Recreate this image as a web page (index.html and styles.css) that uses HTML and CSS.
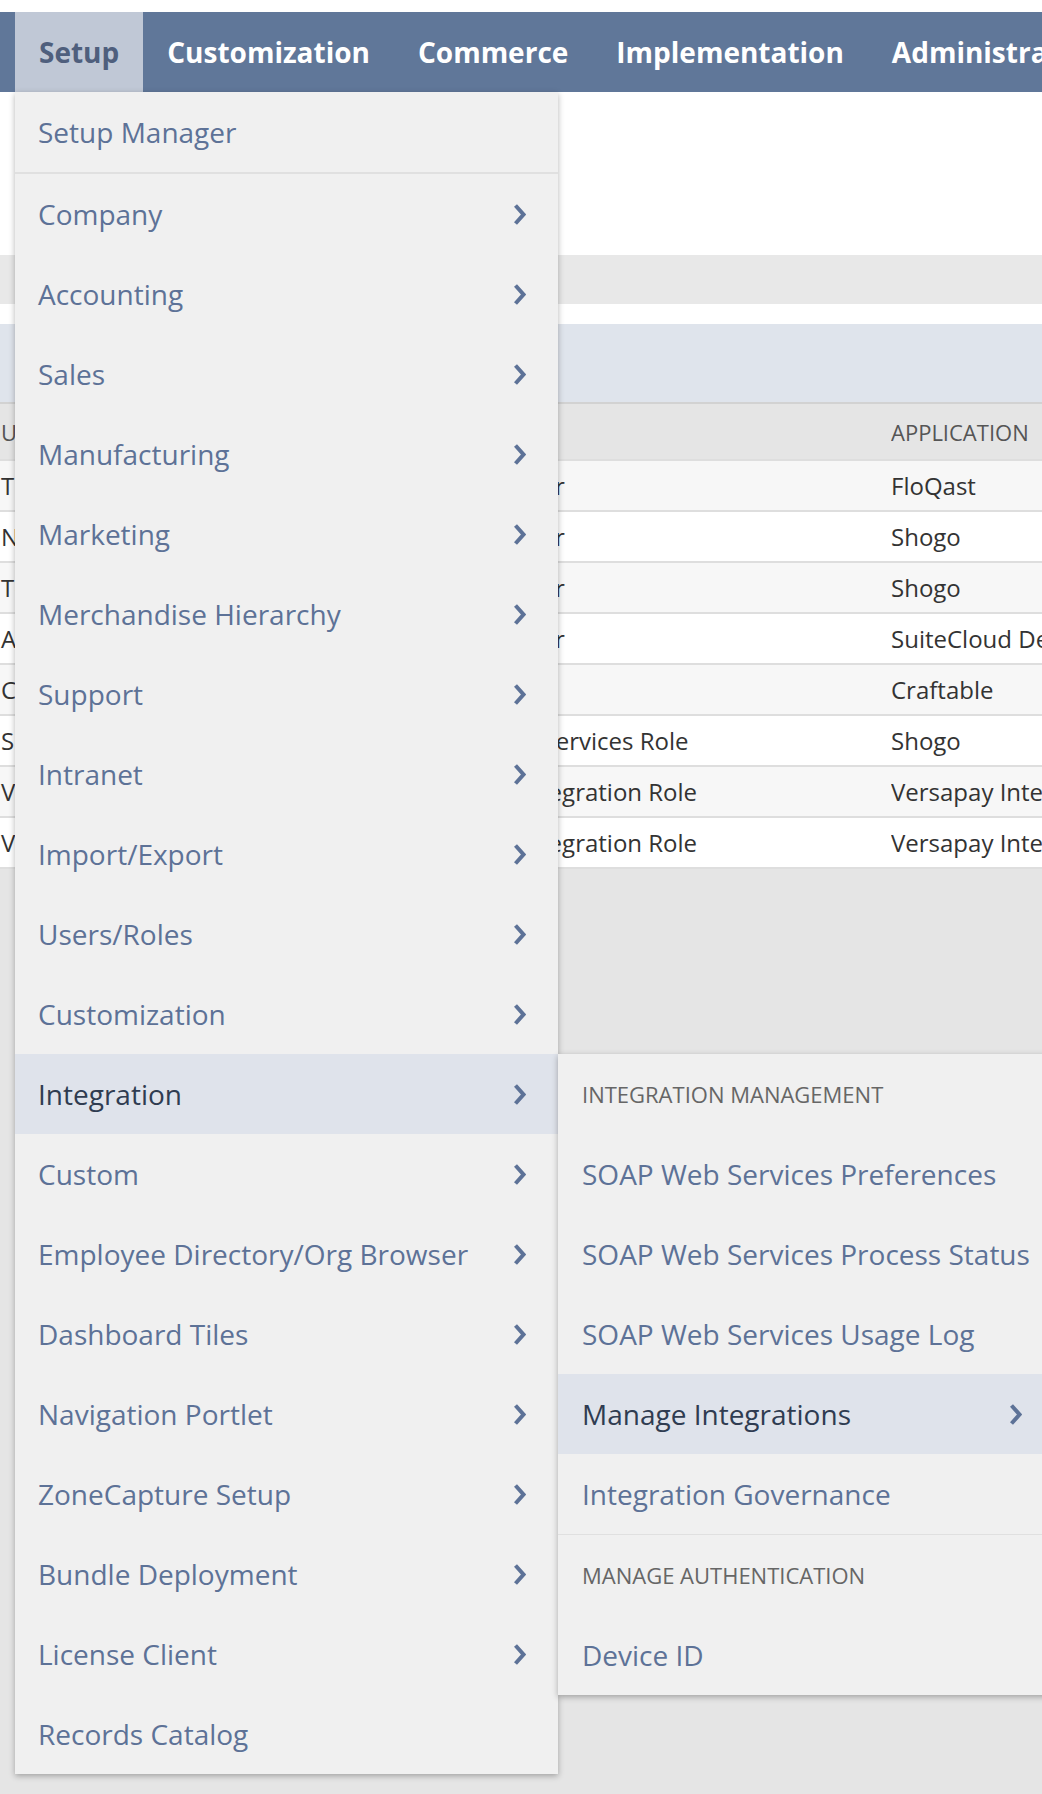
FILE: index.html
```html
<!DOCTYPE html>
<html lang="en">
<head>
    <meta charset="UTF-8">
    <meta name="viewport" content="width=device-width, initial-scale=1.0">
    <title>Setup</title>
    <link rel="stylesheet" href="styles.css">
</head>
<body>
    <div class="topbar"></div>
    <nav class="nav">
        <a class="nav-item active">Setup</a>
        <a class="nav-item">Customization</a>
        <a class="nav-item">Commerce</a>
        <a class="nav-item">Implementation</a>
        <a class="nav-item">Administration</a>
    </nav>

    <div class="page">
        <div class="page-head"></div>
        <div class="band-gray"></div>
        <div class="band-gap"></div>
        <div class="band-blue"></div>
        <div class="grid">
            <div class="grid-row grid-header">
                <div class="cell c1">User</div>
                <div class="cell c2">Role</div>
                <div class="cell c3">Application</div>
            </div>
            <div class="grid-row">
                <div class="cell c1">Trent Wallace</div>
                <div class="cell c2">Administrator</div>
                <div class="cell c3">FloQast</div>
            </div>
            <div class="grid-row">
                <div class="cell c1">Nina Patel</div>
                <div class="cell c2">Administrator</div>
                <div class="cell c3">Shogo</div>
            </div>
            <div class="grid-row">
                <div class="cell c1">Tom Richards</div>
                <div class="cell c2">Administrator</div>
                <div class="cell c3">Shogo</div>
            </div>
            <div class="grid-row">
                <div class="cell c1">Alex Morgan</div>
                <div class="cell c2">Administrator</div>
                <div class="cell c3">SuiteCloud Development Integration</div>
            </div>
            <div class="grid-row">
                <div class="cell c1">Chris Lee</div>
                <div class="cell c2">Accountant</div>
                <div class="cell c3">Craftable</div>
            </div>
            <div class="grid-row">
                <div class="cell c1">Shogo Integration</div>
                <div class="cell c2">Shogo Web Services Role</div>
                <div class="cell c3">Shogo</div>
            </div>
            <div class="grid-row">
                <div class="cell c1">Versapay</div>
                <div class="cell c2">Versapay Integration Role</div>
                <div class="cell c3">Versapay Integration</div>
            </div>
            <div class="grid-row">
                <div class="cell c1">Versapay</div>
                <div class="cell c2">Versapay Integration Role</div>
                <div class="cell c3">Versapay Integration</div>
            </div>
        </div>
    </div>

    <ul class="menu">
        <li class="menu-item first">Setup Manager</li>
        <li class="menu-item">Company <svg class="chev" viewBox="0 0 13 23"><polyline points="2.5,2.5 10.5,11.5 2.5,20.5"/></svg></li>
        <li class="menu-item">Accounting <svg class="chev" viewBox="0 0 13 23"><polyline points="2.5,2.5 10.5,11.5 2.5,20.5"/></svg></li>
        <li class="menu-item">Sales <svg class="chev" viewBox="0 0 13 23"><polyline points="2.5,2.5 10.5,11.5 2.5,20.5"/></svg></li>
        <li class="menu-item">Manufacturing <svg class="chev" viewBox="0 0 13 23"><polyline points="2.5,2.5 10.5,11.5 2.5,20.5"/></svg></li>
        <li class="menu-item">Marketing <svg class="chev" viewBox="0 0 13 23"><polyline points="2.5,2.5 10.5,11.5 2.5,20.5"/></svg></li>
        <li class="menu-item">Merchandise Hierarchy <svg class="chev" viewBox="0 0 13 23"><polyline points="2.5,2.5 10.5,11.5 2.5,20.5"/></svg></li>
        <li class="menu-item">Support <svg class="chev" viewBox="0 0 13 23"><polyline points="2.5,2.5 10.5,11.5 2.5,20.5"/></svg></li>
        <li class="menu-item">Intranet <svg class="chev" viewBox="0 0 13 23"><polyline points="2.5,2.5 10.5,11.5 2.5,20.5"/></svg></li>
        <li class="menu-item">Import/Export <svg class="chev" viewBox="0 0 13 23"><polyline points="2.5,2.5 10.5,11.5 2.5,20.5"/></svg></li>
        <li class="menu-item">Users/Roles <svg class="chev" viewBox="0 0 13 23"><polyline points="2.5,2.5 10.5,11.5 2.5,20.5"/></svg></li>
        <li class="menu-item">Customization <svg class="chev" viewBox="0 0 13 23"><polyline points="2.5,2.5 10.5,11.5 2.5,20.5"/></svg></li>
        <li class="menu-item open">Integration <svg class="chev" viewBox="0 0 13 23"><polyline points="2.5,2.5 10.5,11.5 2.5,20.5"/></svg></li>
        <li class="menu-item">Custom <svg class="chev" viewBox="0 0 13 23"><polyline points="2.5,2.5 10.5,11.5 2.5,20.5"/></svg></li>
        <li class="menu-item">Employee Directory/Org Browser <svg class="chev" viewBox="0 0 13 23"><polyline points="2.5,2.5 10.5,11.5 2.5,20.5"/></svg></li>
        <li class="menu-item">Dashboard Tiles <svg class="chev" viewBox="0 0 13 23"><polyline points="2.5,2.5 10.5,11.5 2.5,20.5"/></svg></li>
        <li class="menu-item">Navigation Portlet <svg class="chev" viewBox="0 0 13 23"><polyline points="2.5,2.5 10.5,11.5 2.5,20.5"/></svg></li>
        <li class="menu-item">ZoneCapture Setup <svg class="chev" viewBox="0 0 13 23"><polyline points="2.5,2.5 10.5,11.5 2.5,20.5"/></svg></li>
        <li class="menu-item">Bundle Deployment <svg class="chev" viewBox="0 0 13 23"><polyline points="2.5,2.5 10.5,11.5 2.5,20.5"/></svg></li>
        <li class="menu-item">License Client <svg class="chev" viewBox="0 0 13 23"><polyline points="2.5,2.5 10.5,11.5 2.5,20.5"/></svg></li>
        <li class="menu-item">Records Catalog</li>
    </ul>

    <ul class="menu submenu">
        <li class="menu-heading">Integration Management</li>
        <li class="menu-item">SOAP Web Services Preferences</li>
        <li class="menu-item">SOAP Web Services Process Status</li>
        <li class="menu-item">SOAP Web Services Usage Log</li>
        <li class="menu-item open">Manage Integrations <svg class="chev" viewBox="0 0 13 23"><polyline points="2.5,2.5 10.5,11.5 2.5,20.5"/></svg></li>
        <li class="menu-item first">Integration Governance</li>
        <li class="menu-heading">Manage Authentication</li>
        <li class="menu-item">Device ID</li>
    </ul>
</body>
</html>
```

FILE: styles.css
```css
html {
    overflow: hidden;
}
body {
    font-family: "Open Sans", "Liberation Sans", sans-serif;
    margin: 0;
    min-height: 1794px;
    background-color: #e5e5e5;
    color: #333;
    position: relative;
}
.topbar {
    height: 12px;
    background-color: #fff;
}
.nav {
    display: flex;
    height: 80px;
    padding-left: 15px;
    background-color: #607799;
    white-space: nowrap;
}
.nav-item {
    display: flex;
    align-items: center;
    padding: 0 24px;
    font-size: 28px;
    font-weight: 700;
    color: #fff;
}
.nav-item.active {
    background-color: #c0c8d6;
    color: #4f5f7d;
}
.page-head {
    height: 163px;
    background-color: #fff;
}
.band-gray {
    height: 49px;
    background-color: #e8e8e8;
}
.band-gap {
    height: 20px;
    background-color: #fff;
}
.band-blue {
    height: 78px;
    background-color: #dfe4ec;
}
.grid {
    font-size: 24px;
}
.grid-row {
    display: flex;
    align-items: center;
    height: 49px;
    border-bottom: 2px solid #dedede;
    background-color: #fff;
    white-space: nowrap;
}
.grid-row:nth-child(even) {
    background-color: #f7f7f7;
}
.grid-header {
    height: 55px;
    border-top: 2px solid #d2d2d2;
    background-color: #e5e5e5;
    font-size: 22px;
    text-transform: uppercase;
    color: #555;
}
.cell {
    overflow: hidden;
}
.c1 {
    width: 409px;
    padding-left: 1px;
}
.c2 {
    width: 481px;
}
.c3 {
    flex: 1;
}
.menu {
    position: absolute;
    top: 92px;
    left: 15px;
    width: 543px;
    margin: 0;
    padding: 0;
    list-style: none;
    background-color: #f0f0f0;
    box-shadow: 0 2px 6px rgba(0, 0, 0, 0.3);
}
.submenu {
    top: 1054px;
    left: 558px;
    width: 496px;
}
.menu-item,
.menu-heading {
    display: flex;
    align-items: center;
    justify-content: space-between;
    height: 80px;
    padding: 0 32px 0 23px;
    font-size: 28px;
    color: #5d7297;
    white-space: nowrap;
}
.submenu .menu-item,
.submenu .menu-heading {
    padding-left: 24px;
}
.menu-item.first {
    border-bottom: 2px solid #e0e0e0;
}
.submenu .menu-item.first {
    border-bottom-width: 1px;
}
.menu-item.open {
    background-color: #dfe3eb;
    color: #2f3c51;
}
.menu-heading {
    font-size: 22px;
    text-transform: uppercase;
    color: #666;
}
.chev {
    width: 13px;
    height: 23px;
    fill: none;
    stroke: #5d7297;
    stroke-width: 4;
}
```
